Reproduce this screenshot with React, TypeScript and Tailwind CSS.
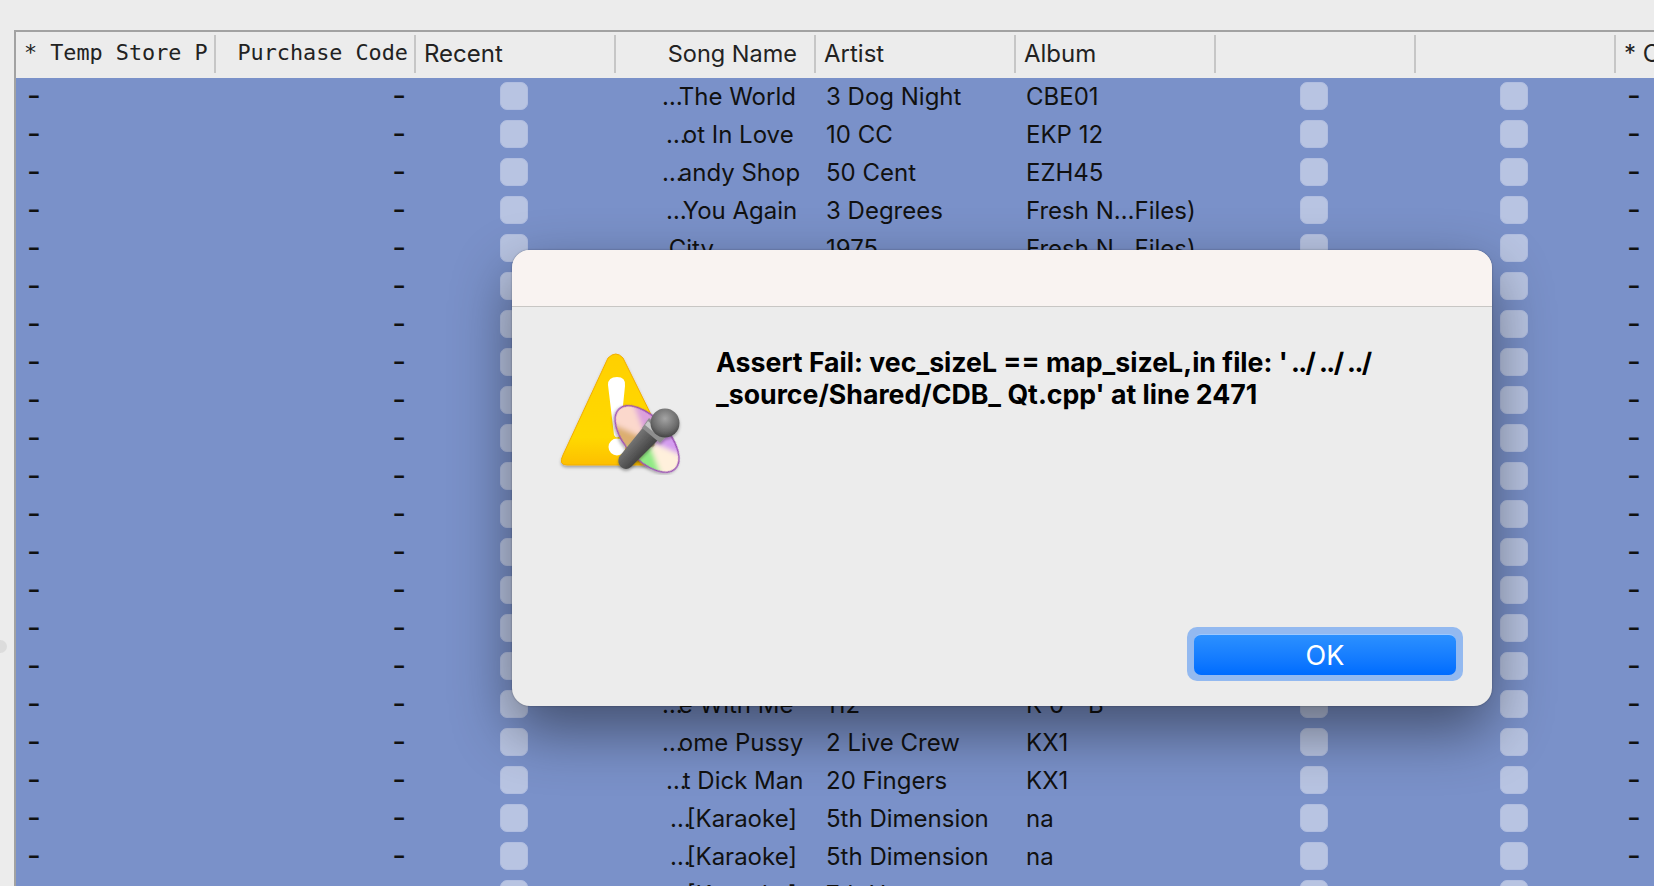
const rows: [string, string, number, string, string][] = [
  ["…", "The World", 46, "3 Dog Night", "CBE01"],
  ["…", "ot In Love", 50, "10 CC", "EKP 12"],
  ["…", "andy Shop", 46, "50 Cent", "EZH45"],
  ["…", "You Again", 50, "3 Degrees", "Fresh N…Files)"],
  ["…", "City", 36, "1975", "Fresh N…Files)"],
  ["", "", 50, "", ""],
  ["", "", 50, "", ""],
  ["", "", 50, "", ""],
  ["", "", 50, "", ""],
  ["", "", 50, "", ""],
  ["", "", 50, "", ""],
  ["", "", 50, "", ""],
  ["", "", 50, "", ""],
  ["", "", 50, "", ""],
  ["", "", 50, "", ""],
  ["", "", 50, "", ""],
  ["…", "e With Me", 46, "112", "K 0—B"],
  ["…", "ome Pussy", 46, "2 Live Crew", "KX1"],
  ["…", "t Dick Man", 50, "20 Fingers", "KX1"],
  ["…", "[Karaoke]", 54, "5th Dimension", "na"],
  ["…", "[Karaoke]", 54, "5th Dimension", "na"],
  ["…", "[Karaoke]", 54, "7th Heaven", "na"],
];

// colours around the disc, every 45deg starting at the lower right tip
const discColors = ["#fff0dc", "#8fea84", "#c4dc78", "#dcae70", "#fbd8cc", "#dca0dc", "#c8a870", "#d49cf0"];

function HeaderCell({ children, className }: { children?: React.ReactNode; className?: string }) {
  return (
    <div className="flex h-full w-[200px] shrink-0 items-center">
      <div className={`min-w-0 flex-1 overflow-hidden whitespace-nowrap ${className ?? ""}`}>{children}</div>
      <div className="h-[38px] w-[2px] shrink-0 bg-[#c6c6c6]" />
    </div>
  );
}

function Check() {
  return (
    <div className="flex justify-center pb-[2px] pr-[4px]">
      <div className="h-[28px] w-[28px] rounded-[7px] border border-[#b0bde0] bg-[#b8c4e2]" />
    </div>
  );
}

function Dash({ className }: { className?: string }) {
  return <div className={`w-[200px] shrink-0 pb-[4px] text-[30px] font-normal leading-[34px] ${className ?? ""}`}>-</div>;
}

function WarningIcon() {
  return (
    <svg width="140" height="130" viewBox="0 0 140 130" className="shrink-0">
      <defs>
        <linearGradient id="tri" x1="0" y1="0" x2="0" y2="1">
          <stop offset="0" stopColor="#ffd000" />
          <stop offset="0.75" stopColor="#ffd900" />
          <stop offset="1" stopColor="#fdbf00" />
        </linearGradient>
        <linearGradient id="handle" x1="0" y1="0" x2="1" y2="1">
          <stop offset="0.2" stopColor="#8a8a8a" />
          <stop offset="0.5" stopColor="#5a5a5a" />
          <stop offset="0.8" stopColor="#2a2a2a" />
        </linearGradient>
        <radialGradient id="head" cx="0.5" cy="0.35" r="0.7">
          <stop offset="0" stopColor="#a4a4a4" />
          <stop offset="0.65" stopColor="#696969" />
          <stop offset="1" stopColor="#3a3a3a" />
        </radialGradient>
        <clipPath id="discClip">
          <ellipse cx="0" cy="0" rx="41" ry="21" />
        </clipPath>
        <filter id="blur" x="-20%" y="-20%" width="140%" height="140%">
          <feGaussianBlur stdDeviation="2.5" />
        </filter>
        <filter id="soft" x="-20%" y="-20%" width="140%" height="140%">
          <feDropShadow dx="0" dy="2" stdDeviation="1.5" floodColor="#000" floodOpacity="0.3" />
        </filter>
      </defs>
      <path
        d="M53 13 Q61 5 68 13 L116 110 Q119 120 109 120 L12 120 Q3 120 8 110 Z"
        fill="url(#tri)"
        stroke="#f2ae00"
        strokeWidth="1"
        filter="url(#soft)"
      />
      <path d="M53 40 Q53 32 62 32 Q71 32 70 41 L65 90 Q62 95 59 90 Z" fill="#fff" />
      <circle cx="62" cy="102" r="8.5" fill="#fff" />
      <g transform="translate(92 94) rotate(47)" filter="url(#soft)">
        <g clipPath="url(#discClip)">
          <g filter="url(#blur)">
            {discColors.map((c, i) => {
              const a = ((i - 0.5) * Math.PI) / 4;
              const b = ((i + 0.5) * Math.PI) / 4;
              return (
                <polygon
                  key={c + i}
                  points={`0,0 ${70 * Math.cos(a)},${70 * Math.sin(a)} ${70 * Math.cos(b)},${70 * Math.sin(b)}`}
                  fill={c}
                  stroke={c}
                />
              );
            })}
          </g>
          <ellipse cx="0" cy="0" rx="10" ry="5" fill="#a89a70" />
        </g>
        <ellipse cx="0" cy="0" rx="41" ry="21" fill="none" stroke="#9a4cb4" strokeWidth="1.5" />
      </g>
      <g filter="url(#soft)">
        <path d="M64 112 L90 80 L105 93 L76 122 Q71 126 66 122 Q62 118 64 112 Z" fill="url(#handle)" />
        <path d="M94 73 L113 90 L105 98 L87 83 Z" fill="#8e8e8e" />
        <path d="M93 76 L104 86 L101 89 L90 80 Z" fill="#c8c8c8" />
        <circle cx="110" cy="78" r="14.5" fill="url(#head)" />
      </g>
    </svg>
  );
}

export default function App() {
  return (
    <div className="relative h-[886px] w-[1654px] overflow-hidden bg-[#ececec] pl-[14px] pt-[30px] font-['Inter',sans-serif] text-[#111]">
      <div className="absolute left-0 top-[640px] h-[13px] w-[7px] rounded-r-full bg-[#dcdcdc]" />

      <div className="h-full overflow-hidden border-l-2 border-t-2 border-[#a2a2a2]">
        <div className="mb-[2px] flex h-[44px] w-[1800px] items-center text-[24px] text-[#222]">
          <HeaderCell className="pb-[1px] pl-[8px] font-['DejaVu_Sans_Mono',monospace] text-[21.8px]">* Temp Store P</HeaderCell>
          <HeaderCell className="pb-[1px] pr-[6px] text-right font-['DejaVu_Sans_Mono',monospace] text-[21.8px]">Purchase Code</HeaderCell>
          <HeaderCell className="pl-[8px]">Recent</HeaderCell>
          <HeaderCell className="pr-[17px] text-right text-[23.5px]">Song Name</HeaderCell>
          <HeaderCell className="pl-[8px]">Artist</HeaderCell>
          <HeaderCell className="pl-[8px]">Album</HeaderCell>
          <HeaderCell />
          <HeaderCell />
          <HeaderCell className="pl-[8px]">* C</HeaderCell>
        </div>

        <div className="w-[1800px] bg-[#7a91c9]">
          {rows.map((r, i) => (
            <div key={i} className="flex h-[38px] items-center whitespace-nowrap text-[24px]">
              <Dash className="pl-[11px]" />
              <Dash className="pr-[10px] text-right" />
              <div className="w-[200px] shrink-0"><Check /></div>
              <div className="w-[200px] shrink-0" style={{ paddingLeft: r[2] }}>
                <span className="tracking-[-3px]">{r[0]}</span>
                <span className="ml-[-1px]">{r[1]}</span>
              </div>
              <div className="w-[200px] shrink-0 pl-[10px]">{r[3]}</div>
              <div className="w-[200px] shrink-0 pl-[10px]">{r[4]}</div>
              <div className="w-[200px] shrink-0"><Check /></div>
              <div className="w-[200px] shrink-0"><Check /></div>
              <Dash className="pl-[11px]" />
            </div>
          ))}
        </div>
      </div>

      <div className="absolute left-[512px] top-[250px] flex h-[456px] w-[980px] flex-col overflow-hidden rounded-[18px] bg-[#ececec] shadow-[0_24px_60px_rgba(0,0,0,0.46),0_0_2px_rgba(0,0,0,0.35)]">
        <div className="h-[57px] shrink-0 border-b border-[#c8c6c4] bg-[#f9f3f1]" />
        <div className="flex flex-1 pl-[43px] pt-[38px]">
          <WarningIcon />
          <p className="ml-[21px] mt-[1px] w-[700px] text-[26.7px] font-bold leading-[32px] text-black">
            Assert Fail: vec_sizeL == map_sizeL,in file: <span className="tracking-[-1.6px]">' ../ ../ ../</span>
            <br />
            _source/Shared/CDB_ Qt.cpp' at line 2471
          </p>
        </div>
        <div className="flex justify-end pb-[25px] pr-[29px]">
          <div className="flex h-[54px] w-[276px] items-center justify-center rounded-[10px] bg-[#93b9f0] pt-[1px]">
            <button className="h-[41px] w-[262px] rounded-[7px] border-t border-[#9cc8ff] bg-gradient-to-b from-[#2b90ff] to-[#006cff] text-[27px] leading-none text-white">
              OK
            </button>
          </div>
        </div>
      </div>
    </div>
  );
}
